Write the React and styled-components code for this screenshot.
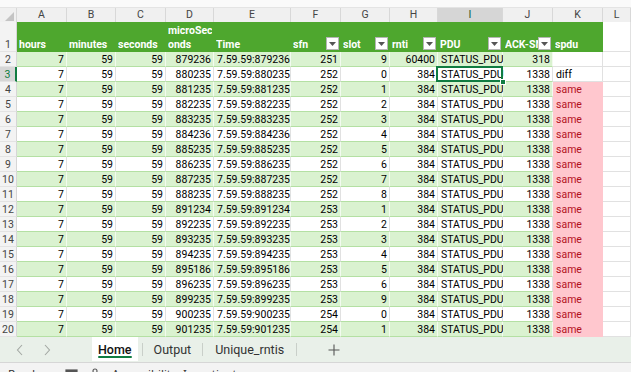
import React from 'react';
import styled, { createGlobalStyle, css } from 'styled-components';

const COLS = '17px 50px 49px 50px 48px 77px 50px 49px 48px 65px 50px 50px 1fr';
const GREEN = '#4ea72e';
const BAND = '#daf2d0';
const ROWLINE = '#b4e0a3';
const GRID = '#e1e1e1';
const XL = '#107c41';

const Global = createGlobalStyle`
  html, body { margin: 0; padding: 0; width: 631px; height: 372px; overflow: hidden; background: #fff; }
  body { font-family: Roboto, "Liberation Sans", sans-serif; color: #000; }
  * { box-sizing: border-box; }
`;

const Page = styled.div`
  display: flex;
  flex-direction: column;
  width: 631px;
  height: 372px;
  overflow: hidden;
  & > * { flex-shrink: 0; }
`;

const TopStrip = styled.div`
  height: 8px;
  background: #fafafa;
  border-bottom: 1px solid #e4e4e4;
`;

const Sheet = styled.div`
  display: flex;
  flex-direction: column;
`;

const ColHeadRow = styled.div`
  display: grid;
  grid-template-columns: ${COLS};
  height: 14px;
  background: #f0f0f0;
`;

const ColHead = styled.div`
  font-size: 10.5px;
  color: #444;
  text-align: center;
  line-height: 14px;
  border-right: 1px solid #d8d8d8;
  border-bottom: 1px solid #d0d0d0;
  ${(p) =>
    p.$active &&
    css`
      background: #d6d6d6;
      color: #0e5a2f;
      border-bottom: 2px solid ${XL};
    `}
`;

const Corner = styled.div`
  border-right: 1px solid #d8d8d8;
  border-bottom: 1px solid #d0d0d0;
  display: flex;
  align-items: flex-end;
  justify-content: flex-end;
  padding: 0 2px 2px 0;
`;

const GridRow = styled.div`
  display: grid;
  grid-template-columns: ${COLS};
  height: ${(p) => p.$h}px;
`;

const RowNum = styled.div`
  background: #f3f3f3;
  color: #444;
  font-size: 10.5px;
  line-height: 13px;
  display: flex;
  align-items: flex-end;
  justify-content: center;
  border-right: 1px solid #d6d6d6;
  border-bottom: 1px solid #e3e3e3;
  ${(p) =>
    p.$active &&
    css`
      background: #d6d6d6;
      color: ${XL};
      border-right: 2px solid ${XL};
    `}
`;

const HeadCell = styled.div`
  background: ${(p) => (p.$blank ? '#fff' : GREEN)};
  border-bottom: 1px solid ${(p) => (p.$blank ? GRID : GREEN)};
  border-right: 1px solid ${(p) => (p.$blank ? GRID : GREEN)};
  color: #fff;
  font-weight: 700;
  font-size: 10.5px;
  line-height: 13.5px;
  display: flex;
  align-items: flex-end;
  padding: 0 1px 0 2px;
  min-width: 0;
  overflow: hidden;
`;

const HeadText = styled.span`
  flex: 1;
  min-width: 0;
  overflow: hidden;
  white-space: nowrap;
`;

const FilterBtn = styled.span`
  flex: none;
  width: 13px;
  height: 13px;
  margin-bottom: 1px;
  background: #fff;
  border: 1px solid #b5b5b5;
  display: flex;
  align-items: center;
  justify-content: center;
`;

const fills = {
  band: css`
    background: ${BAND};
    border-right: 1px solid #f2fbef;
    border-bottom: 1px solid ${ROWLINE};
  `,
  white: css`
    background: #fff;
    border-right: 1px solid ${GRID};
    border-bottom: 1px solid ${ROWLINE};
  `,
  pink: css`
    background: #ffc7ce;
    color: #b3121d;
    border-right: 1px solid #ffc7ce;
    border-bottom: 1px solid #ffc7ce;
  `,
  plain: css`
    background: #fff;
    border-right: 1px solid ${GRID};
    border-bottom: 1px solid ${GRID};
  `,
};

const Cell = styled.div`
  position: relative;
  font-size: 10.5px;
  line-height: 13px;
  padding: 1px 2px 0 3px;
  white-space: nowrap;
  text-align: ${(p) => p.$align || 'left'};
  ${(p) => fills[p.$fill || 'plain']}
  ${(p) =>
    p.$selected &&
    css`
      z-index: 2;
      &::after {
        content: '';
        position: absolute;
        inset: -1px -1px -1px -2px;
        border: 2px solid ${XL};
        pointer-events: none;
      }
    `}
`;

const Handle = styled.span`
  position: absolute;
  right: -4px;
  bottom: -4px;
  width: 6px;
  height: 6px;
  background: ${XL};
  border: 1px solid #fff;
  z-index: 3;
`;

const TabBar = styled.div`
  display: flex;
  align-items: stretch;
  height: 26px;
  background: #e9f0e9;
  border-bottom: 1px solid #d6d6d6;
`;

const NavArea = styled.div`
  width: 92px;
  display: flex;
  align-items: center;
  gap: 19px;
  padding-left: 16px;
`;

const Tab = styled.div`
  display: flex;
  align-items: center;
  padding: 0 ${(p) => p.$pad || 11}px;
  font-size: 12.5px;
  color: #333;
  ${(p) =>
    p.$active &&
    css`
      background: #fff;
      color: #111;
      font-weight: 500;
      position: relative;
      margin-bottom: 1px;
    `}
`;

const Underline = styled.span`
  position: absolute;
  left: 6px;
  right: 6px;
  bottom: 3px;
  height: 2px;
  background: ${XL};
  border-radius: 1px;
`;

const Sep = styled.span`
  width: 1px;
  height: 13px;
  align-self: center;
  background: #c9cfc9;
  margin-left: ${(p) => p.$ml || 0}px;
`;

const AddBtn = styled.div`
  display: flex;
  align-items: center;
  margin-left: 31px;
`;

const StatusBar = styled.div`
  height: 24px;
  background: #f3f3f3;
  display: flex;
  align-items: flex-start;
  gap: 10px;
  padding: 4px 0 0 8px;
  font-size: 11.5px;
  color: #333;
  font-family: "Noto Sans", "Liberation Sans", sans-serif;
  line-height: 14px;
`;

const Chevron = ({ dir }) => (
  <svg width="8" height="12" viewBox="0 0 8 12">
    <path
      d={dir === 'left' ? 'M6 1 L1.5 6 L6 11' : 'M2 1 L6.5 6 L2 11'}
      fill="none"
      stroke="#a3a8a3"
      strokeWidth="1.1"
    />
  </svg>
);

const Tri = () => (
  <svg width="7" height="4" viewBox="0 0 7 4">
    <path d="M0 0 L7 0 L3.5 4 Z" fill="#555" />
  </svg>
);

const letters = ['A', 'B', 'C', 'D', 'E', 'F', 'G', 'H', 'I', 'J', 'K', 'L'];
const headers = [
  { t: 'hours' },
  { t: 'minutes' },
  { t: 'seconds' },
  { t: ['microSec', 'onds'] },
  { t: 'Time' },
  { t: 'sfn', f: true },
  { t: 'slot', f: true },
  { t: 'rnti', f: true },
  { t: 'PDU', f: true },
  { t: 'ACK-SN', f: true },
  { t: 'spdu' },
];

const data = [
  [2, '879236', 251, 9, 60400, 318, ''],
  [3, '880235', 252, 0, 384, 1338, 'diff'],
  [4, '881235', 252, 1, 384, 1338, 'same'],
  [5, '882235', 252, 2, 384, 1338, 'same'],
  [6, '883235', 252, 3, 384, 1338, 'same'],
  [7, '884236', 252, 4, 384, 1338, 'same'],
  [8, '885235', 252, 5, 384, 1338, 'same'],
  [9, '886235', 252, 6, 384, 1338, 'same'],
  [10, '887235', 252, 7, 384, 1338, 'same'],
  [11, '888235', 252, 8, 384, 1338, 'same'],
  [12, '891234', 253, 1, 384, 1338, 'same'],
  [13, '892235', 253, 2, 384, 1338, 'same'],
  [14, '893235', 253, 3, 384, 1338, 'same'],
  [15, '894235', 253, 4, 384, 1338, 'same'],
  [16, '895186', 253, 5, 384, 1338, 'same'],
  [17, '896235', 253, 6, 384, 1338, 'same'],
  [18, '899235', 253, 9, 384, 1338, 'same'],
  [19, '900235', 254, 0, 384, 1338, 'same'],
  [20, '901235', 254, 1, 384, 1338, 'same'],
];

function DataRow({ r }) {
  const [n, us, sfn, slot, rnti, ack, spdu] = r;
  const fill = n % 2 === 0 ? 'band' : 'white';
  const active = n === 3;
  const kFill = spdu === 'same' ? 'pink' : 'plain';
  return (
    <GridRow $h={15}>
      <RowNum $active={active}>{n}</RowNum>
      <Cell $fill={fill} $align="right">7</Cell>
      <Cell $fill={fill} $align="right">59</Cell>
      <Cell $fill={fill} $align="right">59</Cell>
      <Cell $fill={fill} $align="right">{us}</Cell>
      <Cell $fill={fill}>{`7.59.59:${us}`}</Cell>
      <Cell $fill={fill} $align="right">{sfn}</Cell>
      <Cell $fill={fill} $align="right">{slot}</Cell>
      <Cell $fill={fill} $align="right">{rnti}</Cell>
      <Cell $fill={fill} $selected={active}>
        STATUS_PDU
        {active && <Handle />}
      </Cell>
      <Cell $fill={fill} $align="right">{ack}</Cell>
      <Cell $fill={kFill}>{spdu}</Cell>
      <Cell $fill="plain" />
    </GridRow>
  );
}

export default function App() {
  return (
    <Page>
      <Global />
      <TopStrip />
      <Sheet>
        <ColHeadRow>
          <Corner>
            <svg width="9" height="9" viewBox="0 0 9 9">
              <path d="M9 0 L9 9 L0 9 Z" fill="#c4c4c4" />
            </svg>
          </Corner>
          {letters.map((l) => (
            <ColHead key={l} $active={l === 'I'}>
              {l}
            </ColHead>
          ))}
        </ColHeadRow>
        <GridRow $h={30}>
          <RowNum>1</RowNum>
          {headers.map((h, i) => (
            <HeadCell key={i}>
              <HeadText>
                {Array.isArray(h.t) ? (
                  <>
                    {h.t[0]}
                    <br />
                    {h.t[1]}
                  </>
                ) : (
                  h.t
                )}
              </HeadText>
              {h.f && (
                <FilterBtn>
                  <Tri />
                </FilterBtn>
              )}
            </HeadCell>
          ))}
          <HeadCell $blank />
        </GridRow>
        {data.map((r) => (
          <DataRow key={r[0]} r={r} />
        ))}
      </Sheet>
      <TabBar>
        <NavArea>
          <Chevron dir="left" />
          <Chevron dir="right" />
        </NavArea>
        <Tab $active $pad={6}>
          Home
          <Underline />
        </Tab>
        <Sep $ml={4} />
        <Tab>Output</Tab>
        <Sep />
        <Tab $pad={12}>Unique_rntis</Tab>
        <Sep />
        <AddBtn>
          <svg width="12" height="12" viewBox="0 0 12 12">
            <path d="M6 0.5 V11.5 M0.5 6 H11.5" stroke="#555" strokeWidth="1.1" />
          </svg>
        </AddBtn>
      </TabBar>
      <StatusBar>
        <span>Ready</span>
        <svg width="13" height="12" viewBox="0 0 13 12" style={{ marginLeft: 14, marginTop: 2 }}>
          <rect x="1" y="1" width="11" height="8" fill="none" stroke="#555" strokeWidth="1.2" />
          <rect x="1" y="1" width="11" height="2" fill="#555" />
        </svg>
        <svg width="14" height="12" viewBox="0 0 14 12" style={{ marginTop: 1 }}>
          <circle cx="7" cy="3" r="2" fill="none" stroke="#555" strokeWidth="1.1" />
          <path d="M2 6 H12 M7 5 V11" stroke="#555" strokeWidth="1.1" />
        </svg>
        <span>Accessibility: Investigate</span>
      </StatusBar>
    </Page>
  );
}
